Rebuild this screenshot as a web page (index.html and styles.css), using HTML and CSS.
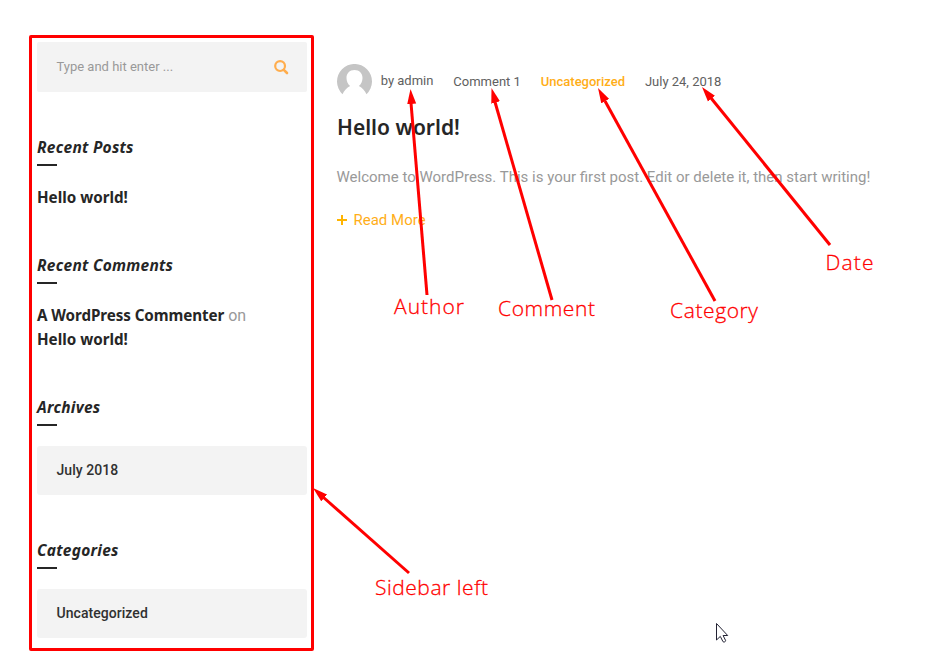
FILE: index.html
```html
<!DOCTYPE html>
<html lang="en">
<head>
<meta charset="utf-8">
<title>Blog</title>
<link rel="stylesheet" href="styles.css">
</head>
<body>
<div class="page">
  <aside class="sidebar">
    <div class="search">
      <span>Type and hit enter ...</span>
      <svg width="15" height="15" viewBox="0 0 15 15"><circle cx="6.1" cy="6.1" r="4.9" fill="none" stroke="#ffad4d" stroke-width="2.2"/><path d="M9.800 9.800l3.200 3.200" stroke="#ffad4d" stroke-width="2.6" stroke-linecap="round"/></svg>
    </div>
    <section class="widget">
      <h3>Recent Posts</h3>
      <p><b>Hello world!</b></p>
    </section>
    <section class="widget">
      <h3>Recent Comments</h3>
      <p><b class="commenter">A WordPress Commenter</b> on<br><b>Hello world!</b></p>
    </section>
    <section class="widget">
      <h3>Archives</h3>
      <div class="item">July 2018</div>
    </section>
    <section class="widget">
      <h3>Categories</h3>
      <div class="item">Uncategorized</div>
    </section>
  </aside>
  <main class="post">
    <div class="meta">
      <svg class="avatar" width="35" height="35" viewBox="0 0 35 35">
        <path d="M5.500 30.200A17.500 17.500 0 1 1 29.500 30.200C28 27 25.200 23.600 21.900 22c2.300-1.900 3.600-4.700 3.600-8 0-4.700-3.100-8-8-8s-8 3.300-8 8c0 3.300 1.300 6.100 3.600 8C9.800 23.600 7 27 5.500 30.200z" fill="#c5c5c5"/>
      </svg>
      <span class="author">by admin</span>
      <span class="comments">Comment 1</span>
      <span class="category">Uncategorized</span>
      <span class="date">July 24, 2018</span>
    </div>
    <h2>Hello world!</h2>
    <p class="excerpt">Welcome to WordPress. This is your first post. Edit or delete it, then start writing!</p>
    <div class="more"><svg width="10" height="10" viewBox="0 0 10 10"><path d="M5 0v10M0 5h10" stroke="#ffb400" stroke-width="2"/></svg><span>Read More</span></div>
  </main>
</div>
<svg class="notes" width="943" height="664" viewBox="0 0 943 664">
  <defs><marker id="head" markerUnits="userSpaceOnUse" markerWidth="16" markerHeight="10" refX="15" refY="5" orient="auto"><path d="M15 5L0 .5v9z" fill="#f00"/></marker></defs>
  <g stroke="#f00" stroke-width="3">
    <path d="M427 295L411 103"/><path d="M552 300L495 102"/><path d="M715 301L605 101"/><path d="M830 245L711 98"/><path d="M409 573L323 497"/>
  </g>
  <g stroke="none" fill="none">
    <path d="M427 295L410.500 89" marker-end="url(#head)"/><path d="M552 300L491.500 88" marker-end="url(#head)"/><path d="M715 301L598 88" marker-end="url(#head)"/><path d="M830 245L702 87" marker-end="url(#head)"/><path d="M409 573L313 488" marker-end="url(#head)"/>
  </g>
  <g class="labels">
    <text x="394" y="314" textLength="70">Author</text>
    <text x="498" y="316" textLength="97">Comment</text>
    <text x="670" y="318" textLength="88">Category</text>
    <text x="825.500" y="270" textLength="48">Date</text>
    <text x="375" y="595" textLength="113">Sidebar left</text>
  </g>
  <path d="M716.500 623.500v16.500l3.800-3.600 2.700 5.300c1 .8 2.800 0 2.600-1.200l-2.500-5h4.600z" fill="#fff" stroke="#223" stroke-width="1"/>
</svg>
</body>
</html>
```
FILE: styles.css
```css
* { box-sizing: border-box; }
body { margin: 0; background: #fff; font-family: Roboto, sans-serif; color: #999; }
h2, h3, p { margin: 0; }
.page { display: flex; width: 943px; height: 664px; padding: 35px 0 0 29px; overflow: hidden; }
.sidebar { width: 285px; height: 616px; border: 3px solid #f00; border-radius: 2px; padding: 4px 4px 0 5px; }
.search { height: 50px; padding: 0 18px 1px 19.500px; background: #f3f3f3; border-radius: 2px; display: flex; align-items: center; justify-content: space-between; font-size: 13px; }
.search svg { margin-top: 2px; }
.widget { margin-top: 45px; }
.widget + .widget { margin-top: 45px; }
h3 { height: 29px; font: italic 700 15.500px/20px "Noto Sans", sans-serif; letter-spacing: 0.25px; color: #262626; white-space: nowrap; }
h3::after { content: ""; display: block; width: 20px; height: 2px; margin-top: 7px; background: #262626; }
.widget p { margin-top: 20px; font-size: 16px; line-height: 24px; white-space: nowrap; }
.widget b { font-family: "Noto Sans", sans-serif; font-size: 15.200px; font-weight: 700; line-height: 1; color: #262626; }
.widget .commenter { letter-spacing: -0.08px; }
.item { height: 49px; margin-top: 20px; padding-left: 19.500px; background: #f3f3f3; border-radius: 3px; font-size: 14px; font-weight: 500; line-height: 48px; letter-spacing: 0.05px; color: #303030; }
.post { margin-left: 23px; padding-top: 29px; white-space: nowrap; }
.meta { display: flex; height: 35px; font-size: 13px; line-height: 35px; color: #606060; }
.author { margin-left: 8.700px; margin-top: -1px; }
.comments, .category, .date { margin-left: 19.900px; }
.category { color: #ffae18; font-weight: 500; }
h2 { margin-top: 13px; font: 600 21px/30px "Noto Sans", sans-serif; color: #262626; }
.excerpt { margin-top: 23px; margin-left: -0.500px; font-size: 15px; line-height: 24px; }
.more { display: flex; align-items: center; gap: 6.500px; margin-top: 19px; font-size: 15px; line-height: 24px; color: #ffae18; }
.notes { position: absolute; left: 0; top: 0; }
.labels { fill: #f00; stroke: #f00; stroke-width: 0.3px; font: 300 21px "Open Sans", sans-serif; }
```
